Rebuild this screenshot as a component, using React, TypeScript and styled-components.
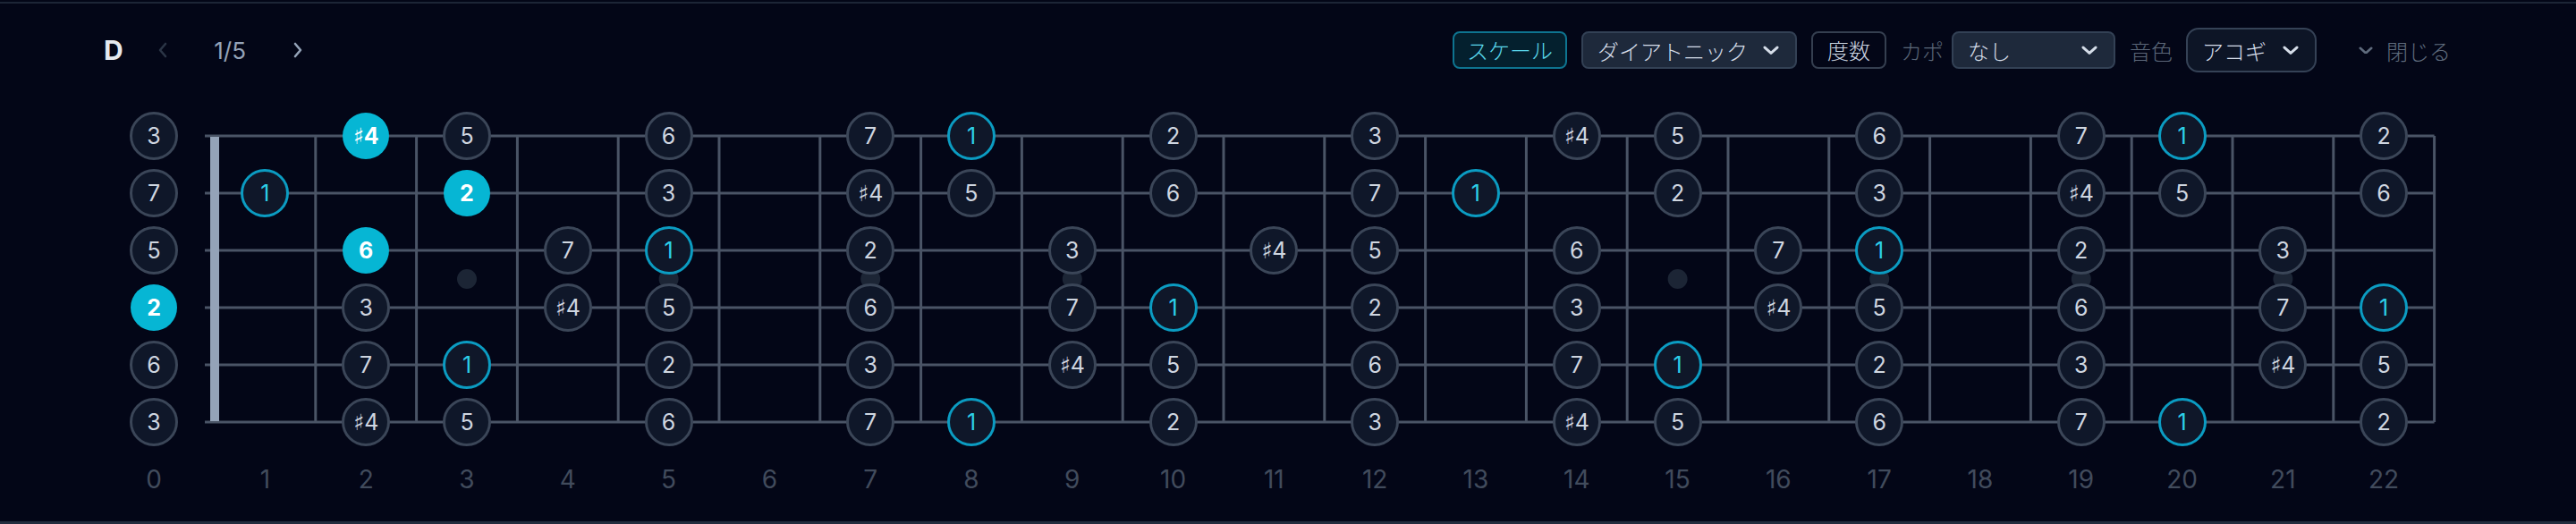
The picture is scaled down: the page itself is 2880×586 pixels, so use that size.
import styled, { createGlobalStyle } from "styled-components";

const FRET_W = 112.8;
const FRETS = 22;
const OPEN = [4, 11, 7, 2, 9, 4];
const DEGREE: Record<number, string> = { 0: "1", 2: "2", 4: "3", 6: "♯4", 7: "5", 9: "6", 11: "7" };
const ACTIVE = new Set(["0-2", "1-3", "2-2", "3-0"]);
const INLAYS = [3, 5, 7, 9, 15, 17, 19, 21];

const GlobalStyle = createGlobalStyle`
  html, body { margin: 0; padding: 0; background: #030617; }
  body { font-family: Inter, "Noto Sans CJK JP", sans-serif; }
`;

const Panel = styled.div`
  box-sizing: border-box;
  width: 2880px;
  height: 584px;
  margin-top: 2px;
  border-top: 2px solid #1c2536;
  border-bottom: 3px solid #222c3d;
  background: #030617;
`;

const Header = styled.div`
  height: 104px;
  display: flex;
  align-items: center;
  justify-content: space-between;
  padding: 0 140px 0 116px;
`;

const Group = styled.div<{ $gap?: number }>`
  display: flex;
  align-items: center;
  gap: ${(p) => p.$gap ?? 0}px;
`;

const Title = styled.span`
  font-family: Inter, sans-serif;
  font-size: 30px;
  font-weight: 700;
  color: #e5e9f0;
  margin-right: 24px;
`;

const NavButton = styled.button<{ $dim?: boolean }>`
  width: 40px;
  height: 40px;
  display: flex;
  align-items: center;
  justify-content: center;
  background: none;
  border: none;
  padding: 0;
  color: ${(p) => (p.$dim ? "#2b3546" : "#94a3b8")};
`;

const Counter = styled.span`
  width: 111px;
  text-align: center;
  font-family: Inter, sans-serif;
  font-size: 26px;
  color: #94a3b8;
`;

const Toggle = styled.button<{ $on?: boolean }>`
  box-sizing: border-box;
  height: 42px;
  padding: 0 ${(p) => (p.$on ? 14 : 16)}px;
  border-radius: 8px;
  border: 2px solid ${(p) => (p.$on ? "#0e7490" : "#353f50")};
  background: ${(p) => (p.$on ? "#04202e" : "transparent")};
  color: ${(p) => (p.$on ? "#5ad8eb" : "#cbd5e1")};
  font-family: "Noto Sans CJK JP", sans-serif;
  font-size: 24px;
  font-weight: 300;
  line-height: 1;
`;

const Label = styled.span`
  font-family: "Noto Sans CJK JP", sans-serif;
  font-size: 24px;
  font-weight: 300;
  color: #5b6678;
`;

const Select = styled.div<{ $width: number; $tall?: boolean }>`
  box-sizing: border-box;
  width: ${(p) => p.$width}px;
  height: ${(p) => (p.$tall ? 50 : 42)}px;
  display: flex;
  align-items: center;
  justify-content: space-between;
  padding: 0 18px 0 16px;
  border-radius: ${(p) => (p.$tall ? 14 : 8)}px;
  border: 2px solid ${(p) => (p.$tall ? "#354256" : "#334155")};
  background: ${(p) => (p.$tall ? "#0d1526" : "#1e293b")};
  color: #d5dde8;
  font-family: "Noto Sans CJK JP", sans-serif;
  font-size: 24px;
  font-weight: 300;
`;

const CloseButton = styled.button`
  display: flex;
  align-items: center;
  gap: 15px;
  margin-left: 31px;
  padding: 0;
  background: none;
  border: none;
  color: #5f6b7d;
  font-family: "Noto Sans CJK JP", sans-serif;
  font-size: 24px;
  font-weight: 300;
`;

const Board = styled.div`
  position: relative;
  margin: 12px 0 0 140px;
  display: grid;
  grid-template-columns: 64px 36px repeat(${FRETS}, ${FRET_W}px);
  grid-template-rows: repeat(6, 64px);
`;

const Lines = styled.svg`
  position: absolute;
  left: 0;
  top: 0;
  pointer-events: none;
`;

const Cell = styled.div<{ $col: number; $row: number }>`
  position: relative;
  z-index: 1;
  grid-column: ${(p) => p.$col};
  grid-row: ${(p) => p.$row};
  display: flex;
  align-items: center;
  justify-content: center;
`;

type Variant = "normal" | "root" | "active";

const Note = styled.div<{ $variant: Variant }>`
  box-sizing: border-box;
  width: ${(p) => (p.$variant === "active" ? 52 : 54)}px;
  height: ${(p) => (p.$variant === "active" ? 52 : 54)}px;
  border-radius: 50%;
  display: flex;
  align-items: center;
  justify-content: center;
  font-family: Inter, "DejaVu Sans", sans-serif;
  font-size: 25px;
  font-weight: ${(p) => (p.$variant === "active" ? 700 : 400)};
  background: ${(p) => (p.$variant === "active" ? "#06b6d4" : "#0f1729")};
  border: ${(p) =>
    p.$variant === "active" ? "none" : `3px solid ${p.$variant === "root" ? "#0b9cc2" : "#3b4658"}`};
  color: ${(p) => (p.$variant === "active" ? "#ffffff" : p.$variant === "root" ? "#2ccfe8" : "#cfd6e0")};
`;

const Numbers = styled.div`
  margin: 12px 0 0 140px;
  height: 40px;
  display: grid;
  grid-template-columns: 64px 36px repeat(${FRETS}, ${FRET_W}px);
  align-items: center;
`;

const FretNum = styled.span<{ $col: number }>`
  grid-column: ${(p) => p.$col};
  text-align: center;
  font-family: Inter, sans-serif;
  font-size: 28px;
  color: #414b5c;
`;

const ChevronDown = ({ w = 18 }: { w?: number }) => (
  <svg width={w} height={w * 0.56} viewBox="0 0 18 10" fill="none">
    <polyline points="2,2 9,8.3 16,2" stroke="currentColor" strokeWidth="3" strokeLinecap="round" strokeLinejoin="round" />
  </svg>
);

const ChevronSide = ({ dir }: { dir: "left" | "right" }) => (
  <svg width="12" height="18" viewBox="0 0 12 18" fill="none">
    <polyline
      points={dir === "left" ? "9,2 3,9 9,16" : "3,2 9,9 3,16"}
      stroke="currentColor"
      strokeWidth="2.6"
      strokeLinecap="round"
      strokeLinejoin="round"
    />
  </svg>
);

const noteAt = (s: number, f: number) => DEGREE[(OPEN[s] + f) % 12];

const variantOf = (s: number, f: number, label: string): Variant =>
  ACTIVE.has(`${s}-${f}`) ? "active" : label === "1" ? "root" : "normal";

const FretLines = () => {
  const end = 100 + FRETS * FRET_W;
  return (
    <Lines width={end + 2} height={384}>
      {OPEN.map((_, s) => (
        <line key={s} x1={89} x2={end} y1={32 + s * 64} y2={32 + s * 64} stroke="#4a5466" strokeWidth={3} />
      ))}
      {Array.from({ length: FRETS }, (_, i) => (
        <line key={i} x1={100 + (i + 1) * FRET_W} x2={100 + (i + 1) * FRET_W} y1={32} y2={352} stroke="#4a5466" strokeWidth={3} />
      ))}
      <rect x={95} y={33} width={10} height={318} fill="#94a3b8" />
      {INLAYS.map((f) => (
        <circle key={f} cx={100 + (f - 0.5) * FRET_W} cy={192} r={11} fill="#1c2535" />
      ))}
    </Lines>
  );
};

export default function App() {
  const cells: { s: number; f: number; label: string }[] = [];
  OPEN.forEach((_, s) => {
    for (let f = 0; f <= FRETS; f++) {
      const label = noteAt(s, f);
      if (label) cells.push({ s, f, label });
    }
  });

  return (
    <>
      <GlobalStyle />
      <Panel>
        <Header>
          <Group>
            <Title>D</Title>
            <NavButton $dim>
              <ChevronSide dir="left" />
            </NavButton>
            <Counter>1/5</Counter>
            <NavButton>
              <ChevronSide dir="right" />
            </NavButton>
          </Group>
          <Group $gap={16}>
            <Toggle $on>スケール</Toggle>
            <Select $width={241}>
              ダイアトニック
              <ChevronDown />
            </Select>
            <Toggle>度数</Toggle>
            <Group $gap={9}>
              <Label>カポ</Label>
              <Select $width={183}>
                なし
                <ChevronDown />
              </Select>
            </Group>
            <Group $gap={15}>
              <Label>音色</Label>
              <Select $width={146} $tall>
                アコギ
                <ChevronDown />
              </Select>
            </Group>
            <CloseButton>
              <ChevronDown w={16} />
              閉じる
            </CloseButton>
          </Group>
        </Header>

        <Board>
          <FretLines />
          {cells.map(({ s, f, label }) => (
            <Cell key={`${s}-${f}`} $col={f === 0 ? 1 : f + 2} $row={s + 1}>
              <Note $variant={variantOf(s, f, label)}>{label}</Note>
            </Cell>
          ))}
        </Board>

        <Numbers>
          {Array.from({ length: FRETS + 1 }, (_, f) => (
            <FretNum key={f} $col={f === 0 ? 1 : f + 2}>
              {f}
            </FretNum>
          ))}
        </Numbers>
      </Panel>
    </>
  );
}
